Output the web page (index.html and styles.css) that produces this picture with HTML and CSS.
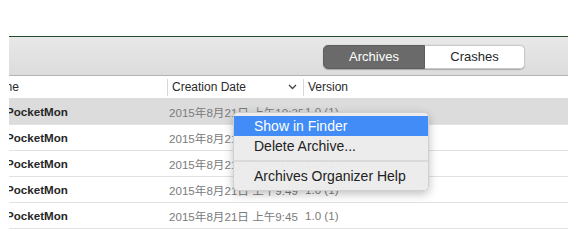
FILE: index.html
```html
<!DOCTYPE html>
<html>
<head>
<meta charset="utf-8">
<link rel="stylesheet" href="styles.css">
</head>
<body>
<div class="window">
  <div class="toolbar">
    <div class="segmented">
      <div class="seg seg-on">Archives</div>
      <div class="seg seg-off">Crashes</div>
    </div>
  </div>
  <div class="table">
    <div class="row header">
      <div class="cell c-name"><span class="clip-name">Name</span></div>
      <div class="cell c-date hdr-date"><span>Creation Date</span><svg class="chev" width="9" height="6" viewBox="0 0 9 6"><path d="M1 1 L4.5 4.5 L8 1" fill="none" stroke="#444" stroke-width="1.3"/></svg></div>
      <div class="cell c-ver hdr-ver">Version</div>
    </div>
    <div class="row sel">
      <div class="cell c-name"><span class="clip-app">PocketMon</span></div>
      <div class="cell c-date">2015年8月21日 上午10:35</div>
      <div class="cell c-ver">1.0 (1)</div>
    </div>
    <div class="row">
      <div class="cell c-name"><span class="clip-app">PocketMon</span></div>
      <div class="cell c-date">2015年8月21日 上午10:12</div>
      <div class="cell c-ver">1.0 (1)</div>
    </div>
    <div class="row">
      <div class="cell c-name"><span class="clip-app">PocketMon</span></div>
      <div class="cell c-date">2015年8月21日 上午10:02</div>
      <div class="cell c-ver">1.0 (1)</div>
    </div>
    <div class="row">
      <div class="cell c-name"><span class="clip-app">PocketMon</span></div>
      <div class="cell c-date">2015年8月21日 上午9:49</div>
      <div class="cell c-ver">1.0 (1)</div>
    </div>
    <div class="row">
      <div class="cell c-name"><span class="clip-app">PocketMon</span></div>
      <div class="cell c-date">2015年8月21日 上午9:45</div>
      <div class="cell c-ver">1.0 (1)</div>
    </div>
  </div>
</div>
<div class="menu">
  <div class="mi mi-hl">Show in Finder</div>
  <div class="mi">Delete Archive...</div>
  <div class="msep"></div>
  <div class="mi">Archives Organizer Help</div>
</div>
</body>
</html>
```
FILE: styles.css
```css
html, body {
  margin: 0;
  padding: 0;
  background: #ffffff;
}
body {
  width: 575px;
  height: 250px;
  overflow: hidden;
  position: relative;
  font-family: "Liberation Sans", "Noto Sans CJK SC", sans-serif;
}
.window {
  margin: 36px 0 0 9px;
  width: 559px;
  overflow: hidden;
}
.toolbar {
  height: 38px;
  border-top: 1px solid #234b2c;
  border-bottom: 1px solid #b4b4b4;
  background: linear-gradient(#e8e8e8, #dcdcdc);
  display: flex;
  justify-content: flex-end;
  align-items: flex-start;
  padding: 8px 43px 0 0;
  box-sizing: border-box;
  height: 40px;
}
.segmented {
  display: flex;
  height: 24px;
  border-radius: 5px;
  box-shadow: 0 0.5px 1px rgba(0,0,0,0.25);
}
.seg {
  font-size: 13px;
  line-height: 22px;
  text-align: center;
  box-sizing: border-box;
  height: 24px;
}
.seg-on {
  width: 102px;
  background: #6a6a6a;
  color: #ffffff;
  border: 1px solid #5e5e5e;
  border-radius: 5px 0 0 5px;
}
.seg-off {
  width: 100px;
  background: #ffffff;
  color: #262626;
  border: 1px solid #c9c9c9;
  border-left: none;
  border-radius: 0 5px 5px 0;
}
.table {
  font-size: 11.6px;
}
.row {
  display: flex;
  height: 26px;
  border-bottom: 1px solid #e2e2e2;
  box-sizing: border-box;
  align-items: center;
}
.row.header {
  height: 23px;
  border-bottom: 1px solid #dedede;
  font-size: 12px;
  color: #2a2a2a;
}
.row.sel {
  background: #dcdcdc;
}
.cell {
  white-space: nowrap;
  overflow: hidden;
  box-sizing: border-box;
}
.c-name {
  width: 158px;
}
.c-date {
  width: 136px;
  padding-left: 2px;
  color: #7b7b7b;
}
.c-ver {
  flex: 1;
  padding-left: 2px;
  color: #7b7b7b;
}
.header .cell {
  height: 17px;
  line-height: 17px;
}
.hdr-date {
  border-left: 1px solid #d8d8d8;
  padding-left: 4px;
  color: #2a2a2a;
  display: flex;
  align-items: center;
  justify-content: space-between;
  padding-right: 6px;
}
.hdr-ver {
  border-left: 1px solid #d8d8d8;
  padding-left: 4px;
  color: #2a2a2a;
}
.clip-name {
  display: inline-block;
  margin-left: -22px;
}
.clip-app {
  display: inline-block;
  margin-left: -3px;
  font-weight: bold;
  color: #262626;
}
.chev {
  display: block;
}
.menu {
  position: absolute;
  left: 233px;
  top: 112px;
  width: 196px;
  padding: 3px 0 4px;
  box-sizing: border-box;
  background: rgba(236, 236, 236, 0.98);
  border: 1px solid rgba(0,0,0,0.12);
  border-radius: 5px;
  box-shadow: 0 3px 10px rgba(0,0,0,0.25);
  font-size: 14px;
  color: #222222;
}
.mi {
  height: 20px;
  line-height: 20px;
  padding-left: 20px;
  white-space: nowrap;
}
.mi-hl {
  background: #418cf6;
  color: #ffffff;
}
.msep {
  height: 2px;
  margin: 4px 0;
  background: #dadada;
}
```
